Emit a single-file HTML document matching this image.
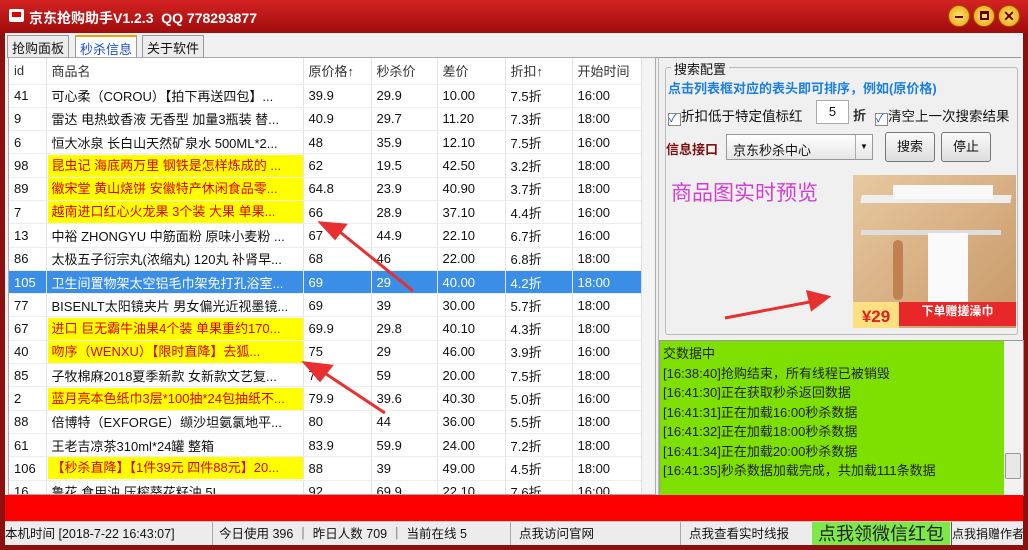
<!DOCTYPE html>
<html><head><meta charset="utf-8"><style>
*{margin:0;padding:0;box-sizing:border-box}
body{width:1028px;height:550px;overflow:hidden;background:#8b1010;font-family:"Liberation Sans","Noto Sans CJK SC",sans-serif;font-size:13px;color:#111;position:relative}
.a{position:absolute}
#title{left:0;top:0;width:1028px;height:33px;background:linear-gradient(#d42222,#a00c0c);color:#fff;font-weight:bold;font-size:14px}
#client{left:5px;top:33px;width:1018px;height:512px;background:#f0f0f0}
.tab{top:2px;height:22px;border:1px solid #999;border-bottom:none;background:#ececec;padding:2px 4px;font-size:13px}
table{border-collapse:collapse;table-layout:fixed}
td{height:23.3px;border-right:1px solid #e4e4e4;border-bottom:1px solid #eee;padding:0 0 0 5px;white-space:nowrap;overflow:hidden;font-size:13px}
tr.h td{height:26px;color:#333}
tr.y td.n span{background:#ffff00;color:#e00000;display:block;margin-left:-4px;padding-left:4px;height:22px;line-height:22px}
tr.s td{background:#3a8ee6;color:#fff}
.btn{border:1px solid #777;border-radius:3px;background:linear-gradient(#fafafa,#ddd);text-align:center;line-height:28px;height:30px}
.st span{position:absolute;top:0;line-height:24px;white-space:nowrap}
</style></head><body>
<div id="title" class="a">
 <div class="a" style="left:9px;top:9px;width:15px;height:13px;background:#fff;border-radius:2px"><div class="a" style="left:3px;top:3px;width:9px;height:5px;background:#d00"></div></div>
 <div class="a" style="left:29px;top:8px">京东抢购助手V1.2.3&nbsp; QQ 778293877</div>
 <div class="a" style="left:948px;top:5px;width:22px;height:22px;border-radius:50%;background:radial-gradient(#ffe27a,#e8a000);border:1px solid #a05000"></div>
 <div class="a" style="left:973px;top:5px;width:22px;height:22px;border-radius:50%;background:radial-gradient(#ffe27a,#e8a000);border:1px solid #a05000"></div>
 <div class="a" style="left:998px;top:5px;width:22px;height:22px;border-radius:50%;background:radial-gradient(#ffe27a,#e8a000);border:1px solid #a05000;color:#600;text-align:center;line-height:20px;font-size:14px">✕</div>
 <div class="a" style="left:955px;top:16px;width:8px;height:2px;background:#600"></div>
 <div class="a" style="left:980px;top:11px;width:9px;height:9px;border:2px solid #600;border-top-width:3px"></div>
</div>
<div id="client" class="a">
 <div class="a tab" style="left:2px">抢购面板</div>
 <div class="a tab" style="left:70px;background:#fff;color:#1a4fd0;border-top:2px solid #f0a000">秒杀信息</div>
 <div class="a tab" style="left:137px">关于软件</div>
 <div class="a" style="left:2px;top:24px;width:1014px;height:1px;background:#999"></div>
 <div class="a" style="left:3px;top:24px;width:648px;height:438px;background:#fff;border:1px solid #aaa;overflow:hidden">
 <table style="width:632px">
 <col style="width:37px"><col style="width:257px"><col style="width:68px"><col style="width:66px"><col style="width:68px"><col style="width:67px"><col style="width:69px">
 <tr class="h"><td>id</td><td>商品名</td><td>原价格↑</td><td>秒杀价</td><td>差价</td><td>折扣↑</td><td>开始时间</td></tr>
 <tr><td>41</td><td class="n">可心柔（COROU）【拍下再送四包】...</td><td>39.9</td><td>29.9</td><td>10.00</td><td>7.5折</td><td>16:00</td></tr>
 <tr><td>9</td><td class="n">雷达 电热蚊香液 无香型 加量3瓶装 替...</td><td>40.9</td><td>29.7</td><td>11.20</td><td>7.3折</td><td>18:00</td></tr>
 <tr><td>6</td><td class="n">恒大冰泉 长白山天然矿泉水 500ML*2...</td><td>48</td><td>35.9</td><td>12.10</td><td>7.5折</td><td>16:00</td></tr>
 <tr class="y"><td>98</td><td class="n"><span>昆虫记 海底两万里 钢铁是怎样炼成的 ...</span></td><td>62</td><td>19.5</td><td>42.50</td><td>3.2折</td><td>18:00</td></tr>
 <tr class="y"><td>89</td><td class="n"><span>徽宋堂 黄山烧饼 安徽特产休闲食品零...</span></td><td>64.8</td><td>23.9</td><td>40.90</td><td>3.7折</td><td>18:00</td></tr>
 <tr class="y"><td>7</td><td class="n"><span>越南进口红心火龙果 3个装 大果 单果...</span></td><td>66</td><td>28.9</td><td>37.10</td><td>4.4折</td><td>16:00</td></tr>
 <tr><td>13</td><td class="n">中裕 ZHONGYU 中筋面粉 原味小麦粉 ...</td><td>67</td><td>44.9</td><td>22.10</td><td>6.7折</td><td>16:00</td></tr>
 <tr><td>86</td><td class="n">太极五子衍宗丸(浓缩丸) 120丸 补肾早...</td><td>68</td><td>46</td><td>22.00</td><td>6.8折</td><td>18:00</td></tr>
 <tr class="s"><td>105</td><td class="n">卫生间置物架太空铝毛巾架免打孔浴室...</td><td>69</td><td>29</td><td>40.00</td><td>4.2折</td><td>18:00</td></tr>
 <tr><td>77</td><td class="n">BISENLT太阳镜夹片 男女偏光近视墨镜...</td><td>69</td><td>39</td><td>30.00</td><td>5.7折</td><td>18:00</td></tr>
 <tr class="y"><td>67</td><td class="n"><span>进口 巨无霸牛油果4个装 单果重约170...</span></td><td>69.9</td><td>29.8</td><td>40.10</td><td>4.3折</td><td>18:00</td></tr>
 <tr class="y"><td>40</td><td class="n"><span>吻序（WENXU）【限时直降】去狐...</span></td><td>75</td><td>29</td><td>46.00</td><td>3.9折</td><td>16:00</td></tr>
 <tr><td>85</td><td class="n">子牧棉麻2018夏季新款 女新款文艺复...</td><td>79</td><td>59</td><td>20.00</td><td>7.5折</td><td>18:00</td></tr>
 <tr class="y"><td>2</td><td class="n"><span>蓝月亮本色纸巾3层*100抽*24包抽纸不...</span></td><td>79.9</td><td>39.6</td><td>40.30</td><td>5.0折</td><td>16:00</td></tr>
 <tr><td>88</td><td class="n">倍博特（EXFORGE）缬沙坦氨氯地平...</td><td>80</td><td>44</td><td>36.00</td><td>5.5折</td><td>18:00</td></tr>
 <tr><td>61</td><td class="n">王老吉凉茶310ml*24罐 整箱</td><td>83.9</td><td>59.9</td><td>24.00</td><td>7.2折</td><td>18:00</td></tr>
 <tr class="y"><td>106</td><td class="n"><span>【秒杀直降】【1件39元 四件88元】20...</span></td><td>88</td><td>39</td><td>49.00</td><td>4.5折</td><td>18:00</td></tr>
 <tr><td>16</td><td class="n">鲁花 食用油 压榨葵花籽油 5L</td><td>92</td><td>69.9</td><td>22.10</td><td>7.6折</td><td>16:00</td></tr>
 </table>
 <div class="a" style="left:632px;top:0;width:15px;height:436px;background:#f4f4f4;border-left:1px solid #ddd"></div>
 </div>
 <svg class="a" style="left:0;top:0" width="660" height="420"><g fill="#e83030" stroke="#e83030" stroke-width="3">
 <line x1="408" y1="258" x2="330" y2="195"/><polygon points="316,190 340,192 330,205"/>
 <line x1="380" y1="380" x2="315" y2="337"/><polygon points="300,330 326,333 315,347"/></g></svg>
 <div class="a" style="left:653px;top:24px;width:1px;height:438px;background:#bbb"></div>
 <div class="a" style="left:660px;top:34px;width:353px;height:268px;border:1px solid #bbb;border-radius:3px"></div>
 <div class="a" style="left:666px;top:26px;background:#f0f0f0;padding:0 3px">搜索配置</div>
 <div class="a" style="left:663px;top:45px;color:#1a7fe0;font-weight:bold;font-size:13px">点击列表框对应的表头即可排序，例如(原价格)</div>
 <div class="a" style="left:663px;top:72px;font-size:13.5px"><span style="display:inline-block;width:13px;height:13px;border:1px solid #888;background:#fff;color:#1a4fd0;font-size:11px;line-height:11px;vertical-align:-1px">✓</span>折扣低于特定值标红</div>
 <div class="a" style="left:811px;top:67px;width:33px;height:24px;border:1px solid #aaa;background:#fff;text-align:center;line-height:22px">5</div>
 <div class="a" style="left:848px;top:72px;font-weight:bold;color:#333">折</div>
 <div class="a" style="left:870px;top:72px;font-size:13.5px"><span style="display:inline-block;width:13px;height:13px;border:1px solid #888;background:#fff;color:#1a4fd0;font-size:11px;line-height:11px;vertical-align:-1px">✓</span>清空上一次搜索结果</div>
 <div class="a" style="left:661px;top:106px;color:#801010;font-weight:bold">信息接口</div>
 <div class="a" style="left:721px;top:101px;width:147px;height:26px;border:1px solid #999;background:linear-gradient(#fff,#e6e6e6);padding:5px 6px">京东秒杀中心</div>
 <div class="a" style="left:850px;top:102px;width:17px;height:24px;border-left:1px solid #aaa;text-align:center;font-size:8px;line-height:24px">▼</div>
 <div class="a btn" style="left:880px;top:99px;width:50px">搜索</div>
 <div class="a btn" style="left:936px;top:99px;width:50px">停止</div>
 <div class="a" style="left:666px;top:144px;color:#d43ed4;font-size:21px">商品图实时预览</div>
 <div class="a" style="left:848px;top:142px;width:163px;height:153px;background:linear-gradient(135deg,#e8c9a0,#c89868);overflow:hidden">
  <div class="a" style="left:8px;top:20px;width:150px;height:8px;background:#eee;transform:skewX(-10deg)"></div>
  <div class="a" style="left:40px;top:10px;width:100px;height:14px;background:#f8f8f8"></div>
  <div class="a" style="left:8px;top:55px;width:140px;height:5px;background:#ddd"></div>
  <div class="a" style="left:75px;top:58px;width:40px;height:70px;background:#fafafa"></div>
  <div class="a" style="left:40px;top:65px;width:10px;height:60px;background:#c08050;border-radius:5px"></div>
  <div class="a" style="left:0;top:127px;width:46px;height:26px;background:#ffe080;color:#e02020;font-size:17px;font-weight:bold;text-align:center;line-height:30px">¥29</div>
  <div class="a" style="left:46px;top:127px;width:117px;height:24px;background:#e82828;color:#fff;font-weight:bold;font-size:12px;text-align:center;line-height:18px">下单赠搓澡巾</div>
 </div>
 <svg class="a" style="left:715px;top:245px" width="120" height="50"><g fill="#e83030" stroke="#e83030" stroke-width="3"><line x1="5" y1="40" x2="95" y2="23"/><polygon points="108,19 88,14 92,31"/></g></svg>
 <div class="a" style="left:654px;top:307px;width:365px;height:156px;border:1px solid #999;background:#fff"></div>
 <div class="a" style="left:655px;top:308px;width:344px;height:154px;background:#7ee000;padding:3px 3px;line-height:19.5px;font-size:13px;color:#222">交数据中<br>[16:38:40]抢购结束，所有线程已被销毁<br>[16:41:30]正在获取秒杀返回数据<br>[16:41:31]正在加载16:00秒杀数据<br>[16:41:32]正在加载18:00秒杀数据<br>[16:41:34]正在加载20:00秒杀数据<br>[16:41:35]秒杀数据加载完成，共加载111条数据</div>
 <div class="a" style="left:999px;top:308px;width:19px;height:154px;background:#f2f2f2"></div>
 <div class="a" style="left:1000px;top:420px;width:16px;height:26px;border:1px solid #999;border-radius:2px;background:#e8e8e8"></div>
 <div class="a" style="left:0;top:462px;width:1018px;height:26px;background:#ff0000"></div>
 <div class="a st" style="left:0;top:488px;width:1018px;height:24px;background:#ececec;border-top:1px solid #ccc;font-size:12.5px;overflow:hidden">
  <span style="left:0">本机时间 [2018-7-22 16:43:07]</span>
  <span style="left:207px;border-left:1px solid #aaa;padding-left:6px">今日使用 396 ｜ 昨日人数 709 ｜ 当前在线 5</span>
  <span style="left:505px;border-left:1px solid #aaa;padding-left:8px">点我访问官网</span>
  <span style="left:675px;border-left:1px solid #aaa;padding-left:8px">点我查看实时线报</span>
  <span style="left:807px;width:138px;background:#7ee84a;color:#222;font-size:18px;text-align:center">点我领微信红包</span>
  <span style="left:946px;border-left:1px solid #555;font-size:12px">点我捐赠作者</span>
 </div>
</div>
</body></html>
